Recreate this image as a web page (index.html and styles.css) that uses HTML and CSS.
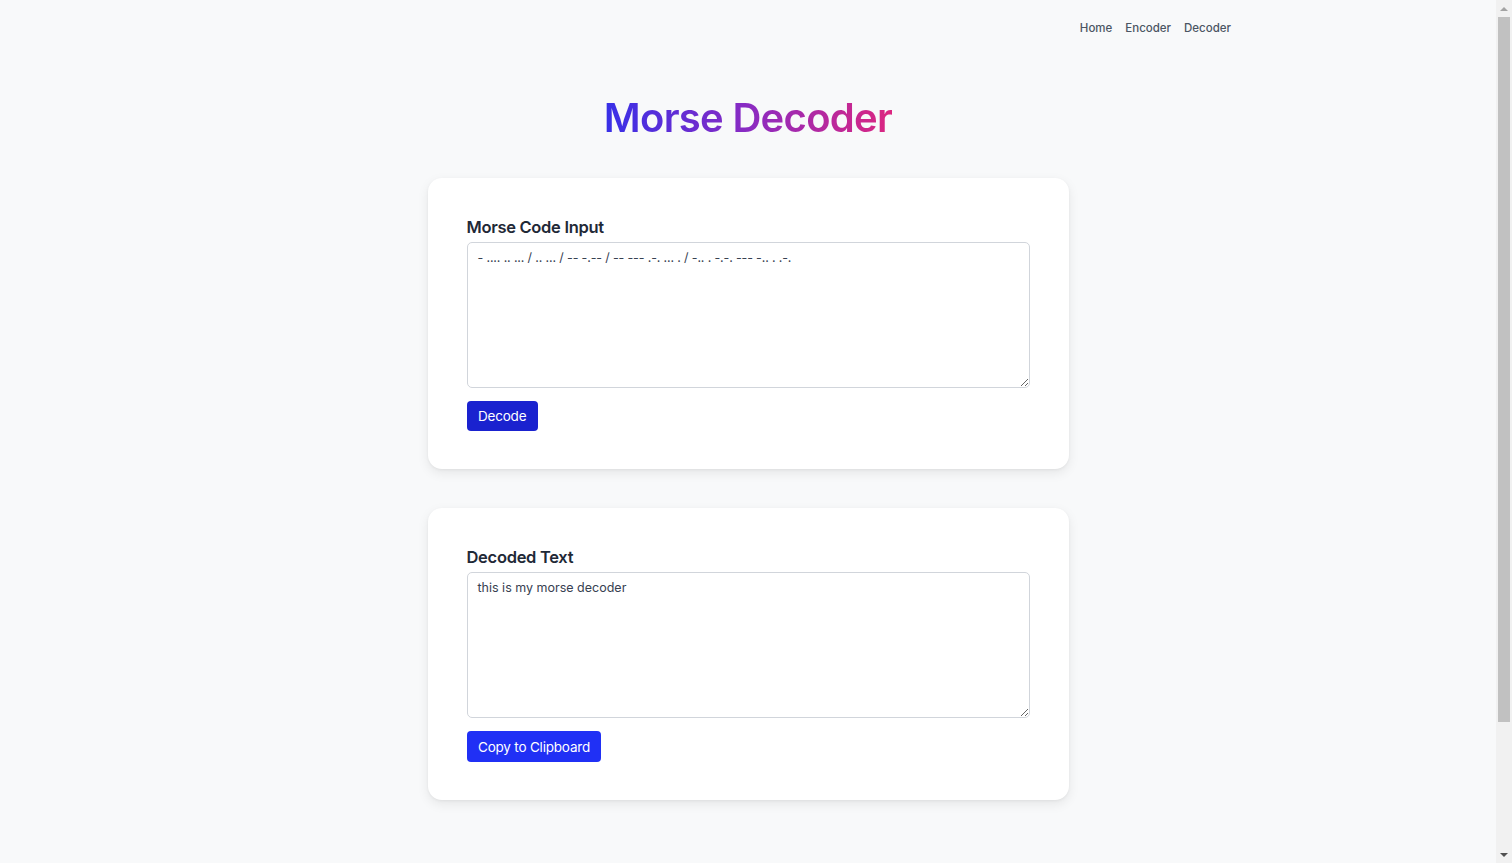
FILE: index.html
```html
<!DOCTYPE html>
<html lang="en">
<head>
<meta charset="utf-8">
<title>Morse Decoder</title>
<link rel="stylesheet" href="styles.css">
</head>
<body>
<div class="page">
  <header class="topbar">
    <nav class="nav">
      <a href="#" class="nav-link">Home</a>
      <a href="#" class="nav-link">Encoder</a>
      <a href="#" class="nav-link">Decoder</a>
    </nav>
  </header>
  <main class="main">
    <h1 class="title">Morse Decoder</h1>
    <section class="card">
      <label class="label" for="input">Morse Code Input</label>
      <textarea id="input" class="field field-morse">- .... .. ... / .. ... / -- -.-- / -- --- .-. ... . / -.. . -.-. --- -.. . .-.</textarea>
      <button class="btn btn-dark">Decode</button>
    </section>
    <section class="card">
      <label class="label" for="output">Decoded Text</label>
      <textarea id="output" class="field">this is my morse decoder</textarea>
      <button class="btn btn-bright">Copy to Clipboard</button>
    </section>
  </main>
</div>
<div class="scrollbar" aria-hidden="true">
  <div class="sb-arrow sb-up"></div>
  <div class="sb-track">
    <div class="sb-thumb"></div>
  </div>
  <div class="sb-arrow sb-down"></div>
</div>
</body>
</html>
```
FILE: styles.css
```css
* { box-sizing: border-box; }
html, body { margin: 0; padding: 0; }
body {
  height: 863px;
  overflow: hidden;
  display: flex;
  background: #f8f9fa;
  font-family: "Inter", "Noto Sans", sans-serif;
  color: #1f2937;
}
.page { flex: 1; min-width: 0; }
.topbar {
  width: 1000px;
  margin: 0 auto;
  padding: 20px 17px 0 0;
  display: flex;
  justify-content: flex-end;
}
.nav { display: flex; gap: 13px; }
.nav-link {
  font-size: 11.5px;
  font-weight: 500;
  color: #4b5563;
  text-decoration: none;
  line-height: 16px;
}
.main {
  width: 641px;
  margin: 0 auto;
  display: flex;
  flex-direction: column;
  gap: 39px;
}
.title {
  margin: 58px 0 -3px;
  text-align: center;
  font-size: 40px;
  line-height: 48px;
  font-weight: 600;
  letter-spacing: -0.7px;
  background: linear-gradient(90deg, #3730e8 0%, #8a2bc2 50%, #dc2680 100%);
  -webkit-background-clip: text;
  background-clip: text;
  color: transparent;
  align-self: center;
}
.card {
  background: #fff;
  border-radius: 14px;
  box-shadow: 0 4px 12px rgba(0,0,0,0.08), 0 1px 3px rgba(0,0,0,0.05);
  padding: 37px 39px 38px;
  display: flex;
  flex-direction: column;
  align-items: flex-start;
}
.label {
  font-size: 16.5px;
  font-weight: 600;
  color: #1f2937;
  line-height: 24px;
  margin-bottom: 3px;
  letter-spacing: -0.3px;
}
.field {
  width: 100%;
  height: 146px;
  border: 1px solid #d1d5db;
  border-radius: 5px;
  padding: 6px 10px;
  font-family: "Inter", "Noto Sans", sans-serif;
  font-size: 12.5px;
  line-height: 18px;
  color: #374151;
  resize: vertical;
  margin-bottom: 13px;
  outline: none;
}
.field-morse { letter-spacing: -0.15px; }
.btn {
  border: none;
  border-radius: 4px;
  color: #fff;
  font-family: "Inter", "Noto Sans", sans-serif;
  font-size: 13.5px;
  line-height: 30px;
  height: 30px;
  padding: 0 11.5px;
  cursor: pointer;
  letter-spacing: -0.2px;
}
.btn-dark { background: #1a22cf; }
.btn-bright { background: #2030f5; height: 31px; }

.scrollbar {
  width: 16px;
  flex: 0 0 16px;
  height: 863px;
  background: #f1f1f1;
  display: flex;
  flex-direction: column;
  align-items: center;
}
.sb-arrow {
  height: 17px;
  width: 100%;
  display: flex;
  align-items: center;
  justify-content: center;
}
.sb-up::before {
  content: "";
  border-left: 4px solid transparent;
  border-right: 4px solid transparent;
  border-bottom: 4px solid #a3a3a3;
}
.sb-down::before {
  content: "";
  border-left: 4px solid transparent;
  border-right: 4px solid transparent;
  border-top: 4px solid #505050;
}
.sb-track {
  flex: 1;
  width: 100%;
  padding: 0 2px;
}
.sb-thumb {
  height: 705px;
  background: #c1c1c1;
}
```
